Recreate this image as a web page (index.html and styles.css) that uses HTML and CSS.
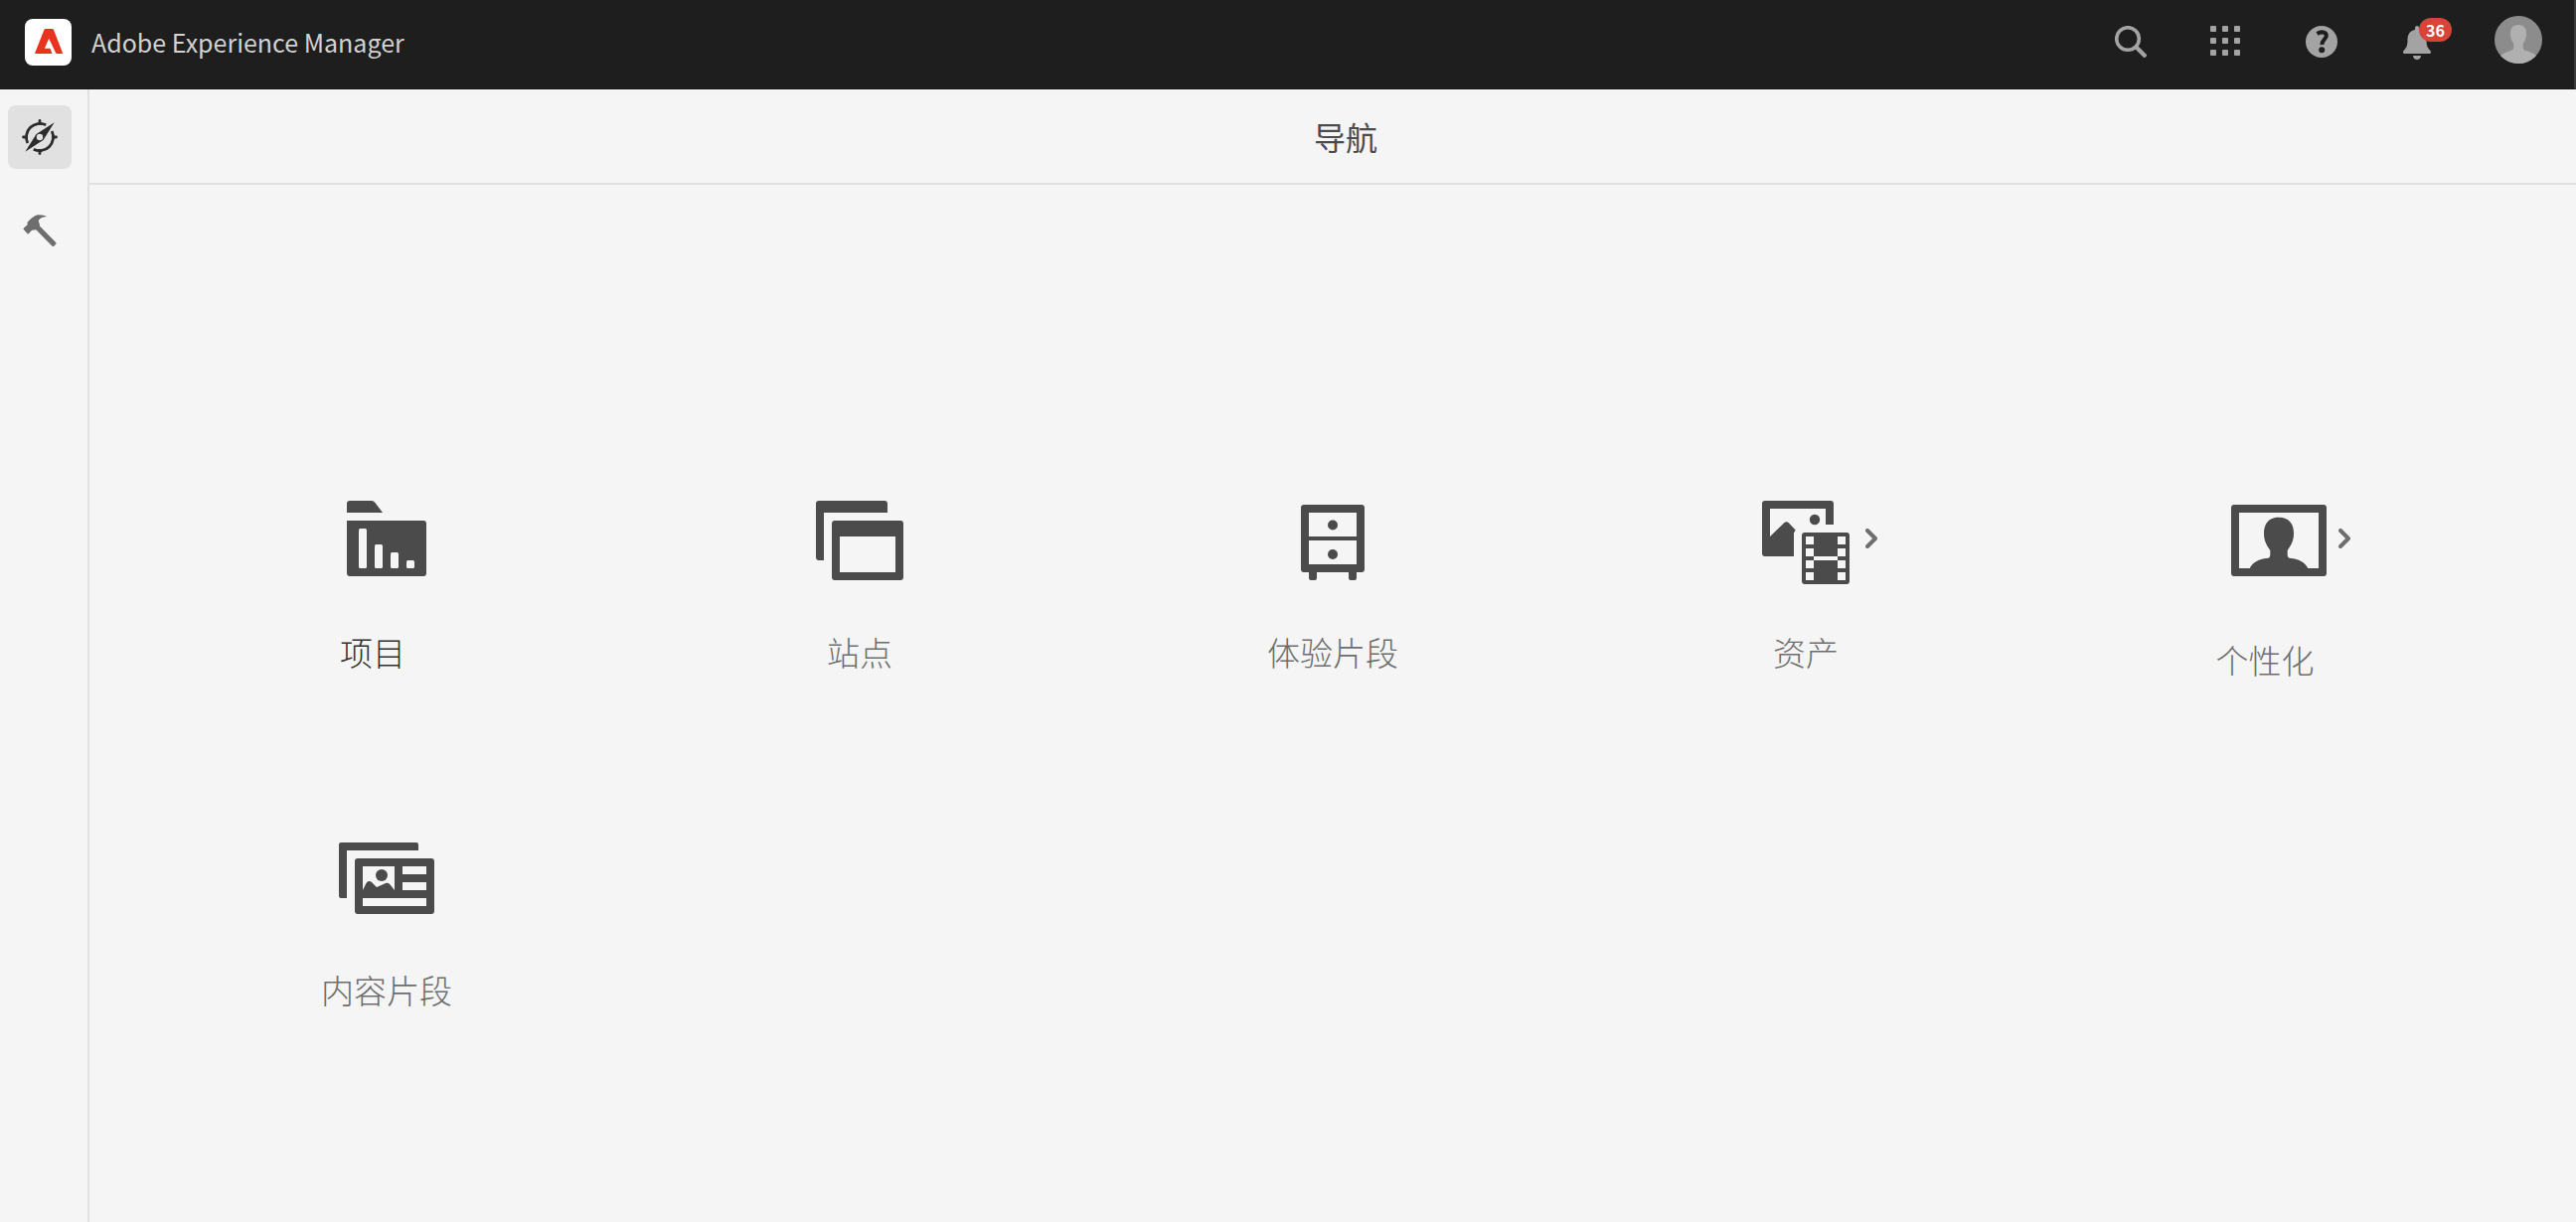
FILE: index.html
```html
<!DOCTYPE html>
<html lang="zh-CN">
<head>
<meta charset="utf-8">
<title>Adobe Experience Manager</title>
<link rel="stylesheet" href="styles.css">
</head>
<body>
<header class="shell-header">
  <a class="brand" href="#">
    <svg class="brand-logo" viewBox="0 0 48 48" aria-hidden="true"><rect width="47" height="47" rx="8" fill="#fff"/><path fill="#e8331f" d="M20.500 10h7.300c.6 0 .9.200 1.100.7L38 34.200c.2.500 0 .8-.5.800h-5.300c-.6 0-.9-.2-1.100-.7L24.200 19.800l-4.300 10h5.100c.4 0 .7.200.8.6l1.500 3.800c.2.500 0 .8-.5.800H10.700c-.5 0-.7-.3-.5-.8l9.300-23.500c.2-.5.500-.7 1-.7z"/></svg>
    <span>Adobe Experience Manager</span>
  </a>
  <nav class="actions" aria-label="工具栏">
    <button class="action" type="button" aria-label="搜索">
      <svg viewBox="0 0 32 32"><circle cx="13" cy="13" r="11.300" fill="none" stroke="#a3a3a3" stroke-width="3.600"/><path d="M21.500 21.500l8.300 8.300" stroke="#a3a3a3" stroke-width="4.200" stroke-linecap="round"/></svg>
    </button>
    <button class="action" type="button" aria-label="解决方案">
      <svg viewBox="0 0 32 32" fill="#a3a3a3"><rect width="6" height="6" rx="1"/><rect x="12" width="6" height="6" rx="1"/><rect x="24" width="6" height="6" rx="1"/><rect y="12" width="6" height="6" rx="1"/><rect x="12" y="12" width="6" height="6" rx="1"/><rect x="24" y="12" width="6" height="6" rx="1"/><rect y="24" width="6" height="6" rx="1"/><rect x="12" y="24" width="6" height="6" rx="1"/><rect x="24" y="24" width="6" height="6" rx="1"/></svg>
    </button>
    <button class="action" type="button" aria-label="帮助">
      <svg viewBox="0 0 32 32"><circle cx="16" cy="16" r="16" fill="#a3a3a3"/><path d="M11.500 8c4-2.800 9.300-1.800 9.300 2 0 3.600-4.800 4.200-4.300 9" fill="none" stroke="#1e1e1e" stroke-width="4"/><circle cx="16.200" cy="24.200" r="3" fill="#1e1e1e"/></svg>
    </button>
    <button class="action" type="button" aria-label="通知">
      <svg viewBox="0 0 32 36" fill="#a3a3a3"><path d="M14 2q0-2 2-2t2 2v2c5.500 1 7.500 5 7.500 10 0 6 1 8 4 11 .8.800.5 3-.5 3H3c-1 0-1.300-2.200-.5-3 3-3 4-5 4-11 0-5 2-9 7.500-10z"/><path d="M12 30h8c0 5.300-8 5.300-8 0z"/></svg>
      <span class="badge">36</span>
    </button>
    <button class="avatar" type="button" aria-label="用户">
      <svg viewBox="0 0 48 48"><defs><clipPath id="avatar-clip"><circle cx="24" cy="24" r="24"/></clipPath></defs><g clip-path="url(#avatar-clip)"><rect width="48" height="48" fill="#8c8c8c"/><path fill="#b0b0b0" d="M24 9c5.500 0 8 3.500 8 8.500 0 2.500-.3 6.500-3.200 10V32c0 1.800 1.200 2.500 3 3 5 1.500 9.700 3.500 12.200 7v8H4v-8c2.500-3.500 7.200-5.500 12.200-7 1.800-.5 3-1.200 3-3v-4.500c-2.900-3.500-3.200-7.500-3.200-10C16 12.500 18.500 9 24 9z"/></g></svg>
    </button>
  </nav>
</header>

<div class="shell-body">
  <nav class="rail" aria-label="主菜单">
    <button class="rail-item rail-item--active" type="button" aria-label="导航">
      <svg viewBox="0 0 36 36"><g fill="none" stroke="#2c2c2c" stroke-width="2.800"><path d="M5.800 24A13.700 13.700 0 0 1 24.200 5.800M30.200 12A13.700 13.700 0 0 1 11.800 30.200"/><path stroke-linecap="round" d="M18 1.500v3M18 31.500v3M1.500 18h3M31.500 18h3"/></g><path fill="#2c2c2c" fill-rule="evenodd" d="M32.700 3.300L21.500 21 3.300 32.700 14.500 15zM18 14.800a3.200 3.200 0 1 0 0 6.400 3.200 3.200 0 0 0 0-6.400z"/></svg>
    </button>
    <button class="rail-item" type="button" aria-label="工具">
      <svg viewBox="0 0 36 36"><path fill="#6e6e6e" d="M2.200 15.300l3.400-3v-2.500C8.500 6.500 12 3.200 15 2.500c4-.8 7.500 0 10 1.500-4 .3-7.500 1.800-8.300 4.500l1.200 3.200v1.800l16 16.300c.8.800.8 1.500 0 2.300l-1.300 1.300c-.8.800-1.500.8-2.300 0L14.300 17.200l-4.300.6-2.700 3c-.7.800-1.100.8-1.800.1l-3.300-3.300c-.8-.8-.8-1.500 0-2.300z"/></svg>
    </button>
  </nav>

  <main class="content">
    <h1 class="content-title">导航</h1>
    <div class="tiles">
      <a class="tile tile--current" href="#">
        <span class="tile-visual">
          <svg class="tile-icon" viewBox="0 0 96 96"><path d="M8 20v-9q0-3 3-3h22q2 0 3.300 1.800L44 20zM8 28h77q3 0 3 3v50q0 3-3 3H11q-3 0-3-3z"/><g fill="#f5f5f5"><rect x="20" y="36" width="8" height="40" rx="1.500"/><rect x="36" y="52" width="8" height="24" rx="1.500"/><rect x="52" y="60" width="8" height="16" rx="1.500"/><rect x="68" y="68" width="8" height="8" rx="1.500"/></g></svg>
        </span>
        <span class="tile-label tile-label--inset">项目</span>
      </a>
      <a class="tile" href="#">
        <span class="tile-visual">
          <svg class="tile-icon" viewBox="0 0 96 96"><path d="M7 8h66q3 0 3 3v9H12v48H7q-3 0-3-3V11q0-3 3-3z"/><path fill-rule="evenodd" d="M23 28h66q3 0 3 3v54q0 3-3 3H23q-3 0-3-3V31q0-3 3-3zM28 44v36h56V44z"/></svg>
        </span>
        <span class="tile-label">站点</span>
      </a>
      <a class="tile" href="#">
        <span class="tile-visual">
          <svg class="tile-icon" viewBox="0 0 96 96"><path fill-rule="evenodd" d="M19 12h58q3 0 3 3v62q0 3-3 3h-5v6q0 2-2 2h-4q-2 0-2-2v-6H32v6q0 2-2 2h-4q-2 0-2-2v-6h-5q-3 0-3-3V15q0-3 3-3zM24 20v24h48V20zM24 48v24h48V48z"/><circle cx="48" cy="32.500" r="5"/><circle cx="48" cy="62" r="5"/></svg>
        </span>
        <span class="tile-label">体验片段</span>
      </a>
      <a class="tile" href="#">
        <span class="tile-visual">
          <svg class="tile-icon" viewBox="0 0 96 96"><path d="M7 8h66q3 0 3 3v21h-8V16H12v28l14-13.500q2.500-2.500 5 0l6.700 7L36 40.500V64H7q-3 0-3-3V11q0-3 3-3z"/><circle cx="57" cy="27" r="5.200"/><rect x="44" y="40" width="48" height="52" rx="3"/><path fill="#f5f5f5" d="M48 44h8v8h-8zM48 56h8v8h-8zM48 68h8v8h-8zM48 80h8v8h-8zM80 44h8v8h-8zM80 56h8v8h-8zM80 68h8v8h-8zM80 80h8v8h-8zM56 64h24v4H56z"/></svg>
          <svg class="tile-chevron" viewBox="0 0 12 20"><path d="M2 2l8 8-8 8"/></svg>
        </span>
        <span class="tile-label">资产</span>
      </a>
      <a class="tile" href="#">
        <span class="tile-visual">
          <svg class="tile-icon" viewBox="0 0 96 96"><path fill-rule="evenodd" d="M3 12h90q3 0 3 3v66q0 3-3 3H3q-3 0-3-3V15q0-3 3-3zM8 20v56h80V20z"/><path d="M48 24.700c10 0 15 6.500 15 16.300 0 8-3.300 12.500-6.300 17v4.500c0 2.200 1 3.300 3.500 3.500 7.500.7 14 3.500 17.300 10.500h-59C21.800 69.500 28.300 66.700 35.800 66c2.500-.2 3.500-1.300 3.500-3.500V58C36.300 53.500 33 49 33 41c0-9.800 5-16.300 15-16.300z"/></svg>
          <svg class="tile-chevron" viewBox="0 0 12 20"><path d="M2 2l8 8-8 8"/></svg>
        </span>
        <span class="tile-label tile-label--inset tile-label--low">个性化</span>
      </a>
      <a class="tile" href="#">
        <span class="tile-visual">
          <svg class="tile-icon" viewBox="0 0 96 96"><path d="M2 12h76q2 0 2 2v6H8v48H2q-2 0-2-2V14q0-2 2-2z"/><path fill-rule="evenodd" d="M19 28h74q3 0 3 3v50q0 3-3 3H19q-3 0-3-3V31q0-3 3-3zM24 36v24l3.500-7c1.500-2.500 4-2.500 5.500-1l5 5 8.500-3.800c2-.9 3.500-.5 4.700.8L56 60V36zM64 36v8h24v-8zM64 52v8h24v-8zM24 68v8h64v-8z"/><circle cx="43" cy="45" r="6"/></svg>
        </span>
        <span class="tile-label">内容片段</span>
      </a>
    </div>
  </main>
</div>
</body>
</html>
```
FILE: styles.css
```css
* {
  box-sizing: border-box;
}

body {
  margin: 0;
  min-height: 100vh;
  display: flex;
  flex-direction: column;
  background: #f5f5f5;
  font-family: "Noto Sans CJK SC", sans-serif;
  color: #4b4b4b;
}

button {
  padding: 0;
  border: 0;
  background: none;
  font: inherit;
  cursor: pointer;
}

svg {
  display: block;
}

.shell-header {
  display: flex;
  justify-content: space-between;
  align-items: flex-start;
  height: 90px;
  padding: 16px 32px 0 25px;
  background: #1e1e1e;
  border-bottom: 1px solid #1a141a;
  border-right: 2px solid #3c3c3c;
}

.brand {
  display: flex;
  gap: 19px;
  padding-top: 3px;
  font-size: 25px;
  line-height: 46px;
  color: #d2d2d2;
  text-decoration: none;
}

.brand-logo {
  width: 48px;
  height: 48px;
}

.actions {
  display: flex;
  gap: 64px;
}

.action {
  position: relative;
  display: flex;
  align-items: flex-start;
  width: 32px;
  height: 36px;
  margin-top: 10px;
}

.action svg {
  width: 32px;
}

.badge {
  position: absolute;
  top: -8px;
  left: 18px;
  width: 33px;
  border-radius: 12px;
  background: #d7443a;
  color: #fff;
  font-size: 16px;
  font-weight: 700;
  line-height: 24px;
  text-align: center;
}

.avatar {
  width: 48px;
  height: 48px;
  margin-left: -2px;
}

.shell-body {
  flex: 1;
  display: flex;
}

.rail {
  display: flex;
  flex-direction: column;
  gap: 30px;
  width: 90px;
  padding: 16px 8px;
  border-right: 2px solid #e1e1e1;
}

.rail-item {
  display: grid;
  place-items: center;
  width: 64px;
  height: 64px;
  border-radius: 8px;
}

.rail-item--active {
  background: #e1e1e1;
}

.rail-item svg {
  width: 36px;
  height: 36px;
}

.content {
  flex: 1;
}

.content-title {
  margin: 0;
  padding: 24px 0 24px 26px;
  border-bottom: 2px solid #e1e1e1;
  text-align: center;
  font-size: 32px;
  font-weight: 400;
  line-height: 46px;
}

.tiles {
  display: grid;
  grid-template-columns: repeat(5, 1fr);
  grid-auto-rows: 340px;
  padding: 310px 61px 0;
}

.tile {
  color: #6e6e6e;
  text-decoration: none;
}

.tile--current {
  color: #323232;
}

.tile-visual {
  display: grid;
  grid-template-columns: 1fr 96px 1fr;
  column-gap: 12px;
  align-items: center;
}

.tile-icon {
  grid-column: 2;
  width: 96px;
  height: 96px;
  fill: #4b4b4b;
}

.tile-chevron {
  width: 12px;
  height: 20px;
  margin-bottom: 4px;
  fill: none;
  stroke: #6e6e6e;
  stroke-width: 4px;
  stroke-linecap: round;
  stroke-linejoin: round;
}

.tile-label {
  display: block;
  margin-top: 40px;
  text-align: center;
  font-size: 33px;
  font-weight: 300;
  line-height: 48px;
}

.tile-label--inset {
  padding-right: 28px;
}

.tile-label--low {
  margin-top: 48px;
}
```
